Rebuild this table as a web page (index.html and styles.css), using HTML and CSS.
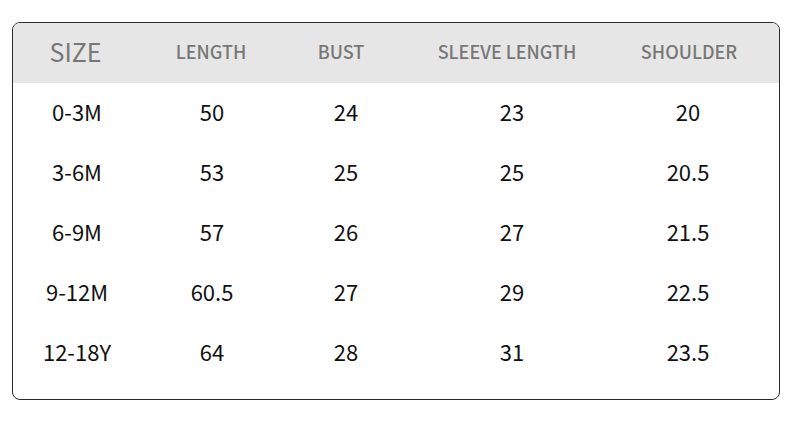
FILE: index.html
```html
<!DOCTYPE html>
<html>
<head>
<meta charset="utf-8">
<link rel="stylesheet" href="styles.css">
</head>
<body>
<div class="page">
  <div class="chart">
    <div class="row head">
      <div class="cell size-h">SIZE</div>
      <div class="cell">LENGTH</div>
      <div class="cell">BUST</div>
      <div class="cell">SLEEVE LENGTH</div>
      <div class="cell">SHOULDER</div>
    </div>
    <div class="row body">
      <div class="cell">0-3M</div><div class="cell">50</div><div class="cell">24</div><div class="cell">23</div><div class="cell">20</div>
    </div>
    <div class="row body">
      <div class="cell">3-6M</div><div class="cell">53</div><div class="cell">25</div><div class="cell">25</div><div class="cell">20.5</div>
    </div>
    <div class="row body">
      <div class="cell">6-9M</div><div class="cell">57</div><div class="cell">26</div><div class="cell">27</div><div class="cell">21.5</div>
    </div>
    <div class="row body">
      <div class="cell">9-12M</div><div class="cell">60.5</div><div class="cell">27</div><div class="cell">29</div><div class="cell">22.5</div>
    </div>
    <div class="row body">
      <div class="cell">12-18Y</div><div class="cell">64</div><div class="cell">28</div><div class="cell">31</div><div class="cell">23.5</div>
    </div>
  </div>
</div>
</body>
</html>
```
FILE: styles.css
```css
html, body {
  margin: 0;
  padding: 0;
  background: #ffffff;
}
.page {
  width: 790px;
  height: 423px;
  padding: 22px 0 0 12px;
  box-sizing: border-box;
}
.chart {
  width: 768px;
  height: 378px;
  box-sizing: border-box;
  border: 1px solid #2b2b2b;
  border-radius: 8px;
  overflow: hidden;
  font-family: "Noto Sans CJK SC", "Noto Sans", sans-serif;
  color: #111111;
}
.row {
  display: grid;
  height: 60px;
  align-items: center;
}
.head {
  grid-template-columns: 125px 146px 114px 218px 146px 1fr;
  background: #e6e6e6;
  color: #777777;
  font-size: 18px;
  font-weight: 500;
}
.body {
  grid-template-columns: 128px 142px 126px 206px 146px 1fr;
  font-size: 22px;
}
.cell {
  text-align: center;
  line-height: 1;
  white-space: nowrap;
  padding-bottom: 4px;
}
.size-h {
  font-size: 25px;
  font-weight: 400;
}
```
